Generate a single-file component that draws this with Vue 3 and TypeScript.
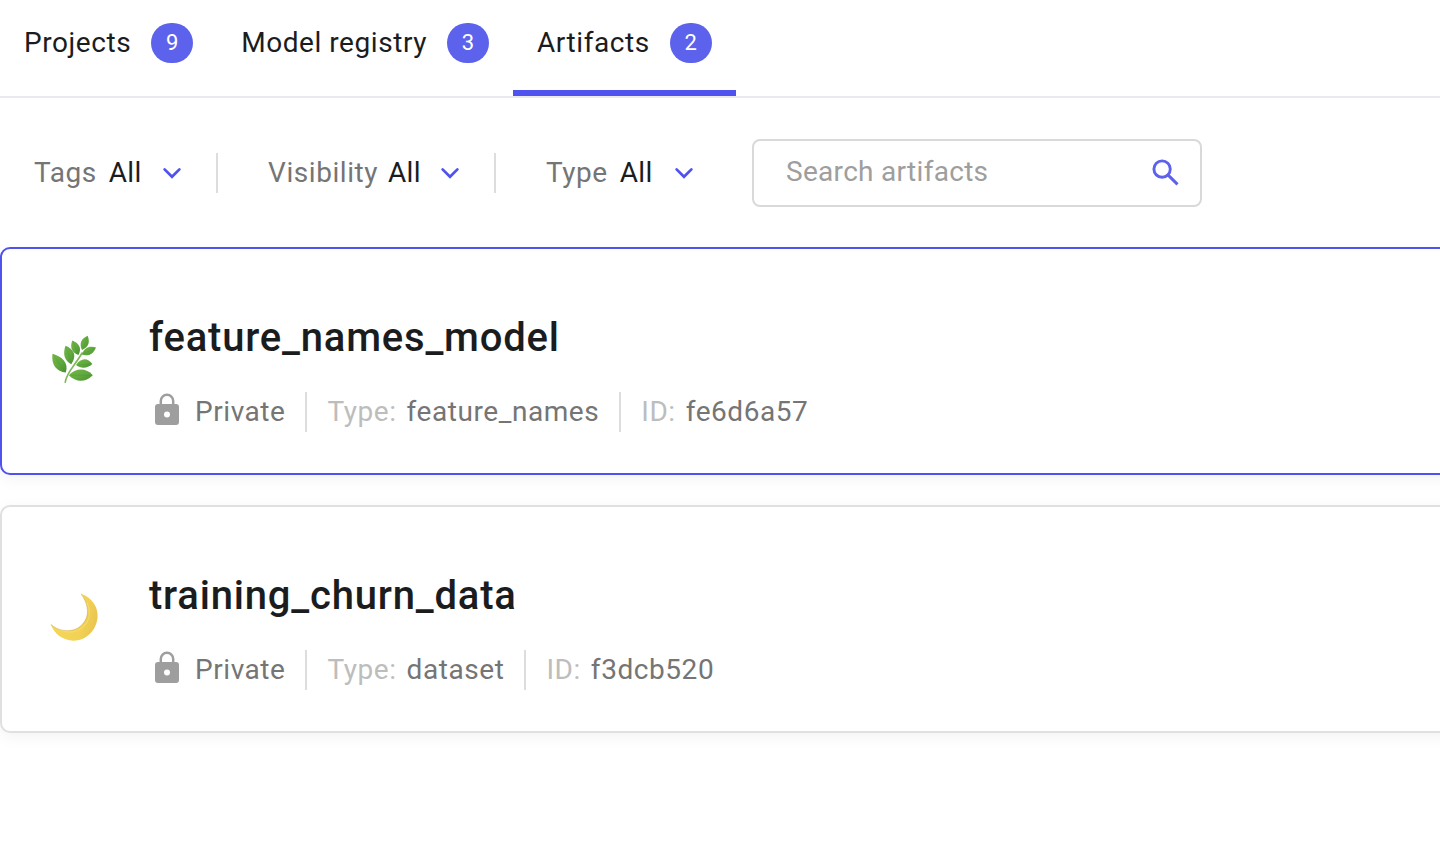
<script setup lang="ts">
interface Tab { label: string; count: number; active?: boolean }
interface Artifact { icon: 'herb' | 'moon'; name: string; type: string; id: string; selected?: boolean }

const tabs: Tab[] = [
  { label: 'Projects', count: 9 },
  { label: 'Model registry', count: 3 },
  { label: 'Artifacts', count: 2, active: true },
]
const filters: string[] = ['Tags', 'Visibility', 'Type']
const artifacts: Artifact[] = [
  { icon: 'herb', name: 'feature_names_model', type: 'feature_names', id: 'fe6d6a57', selected: true },
  { icon: 'moon', name: 'training_churn_data', type: 'dataset', id: 'f3dcb520' },
]
</script>

<template>
  <main class="page">
    <nav class="tabs">
      <a v-for="tab in tabs" :key="tab.label" class="tab" :class="{ active: tab.active }">
        <span>{{ tab.label }}</span>
        <span class="badge">{{ tab.count }}</span>
      </a>
    </nav>

    <div class="filters">
      <div v-for="name in filters" :key="name" class="filter" :class="name.toLowerCase()">
        <span class="filter-name">{{ name }}</span>
        <span class="filter-value">All</span>
        <svg class="chevron" width="20" height="14" viewBox="0 0 20 14">
          <path d="M2.6 3.4 10 10.800l7.400-7.400" fill="none" stroke="#4f52ee" stroke-width="2.700" stroke-linecap="round" />
        </svg>
      </div>
      <label class="search">
        <input type="text" placeholder="Search artifacts" />
        <svg width="28" height="28" viewBox="0 0 28 28" fill="none" stroke="#5d62ec" stroke-width="2.900">
          <circle cx="10.100" cy="10.100" r="8.200" />
          <path d="M15.900 15.900 25.500 25.400" stroke-width="3" />
        </svg>
      </label>
    </div>

    <section class="list">
      <article v-for="item in artifacts" :key="item.id" class="card" :class="{ selected: item.selected }">
        <svg v-if="item.icon === 'herb'" class="emoji" width="50" height="50" viewBox="0 0 50 50">
          <defs>
            <linearGradient id="leaf" x1="0" y1="0" x2="1" y2="1">
              <stop offset="0" stop-color="#74b848" />
              <stop offset=".55" stop-color="#5fa83d" />
              <stop offset="1" stop-color="#468f30" />
            </linearGradient>
          </defs>
          <path d="M15.200 48.300C16.500 38 25.500 31 32 19" fill="none" stroke="#7fb957" stroke-width="1.600" stroke-linecap="round" />
          <g fill="url(#leaf)">
            <path d="M2.500 19.800C12 22.500 19 28.500 15.800 38.600 6.500 37.500 1 31 2.500 19.800Z" />
            <path d="M15.500 11.700C23.500 15 27.500 21 21.200 30.300 14.500 26.500 12.500 20 15.500 11.700Z" />
            <path d="M22.300 6.500C29.500 9.500 32 14.500 28.400 21 22 18.500 19.500 13.500 22.300 6.500Z" />
            <path d="M37.700 1.700C40.200 8.500 38.500 13 32 16 29 9.500 31 4.500 37.700 1.700Z" />
            <path d="M46 13.400C43 20.500 38 22.500 31.800 20.600 34 14 39 11.500 46 13.400Z" />
            <path d="M42.300 30C37 34.800 31 34.800 26 31 30.500 24 37.500 23 42.300 30Z" />
            <path d="M42.800 41.200C35 48.800 26 48.300 18.800 41.200 25.500 34 36 33.500 42.800 41.200Z" />
          </g>
          <g fill="none" stroke="#3f8a30" stroke-width=".6" opacity=".4">
            <path d="M3 20.500 15.500 38M16 12.500l5.200 17M23 7.500l5.200 13M37.500 2.500l-5.300 13M45 14l-13 6.500M41.500 30 27 31M42 41.300 20 41.200" />
          </g>
        </svg>
        <svg v-else class="emoji" width="50" height="50" viewBox="0 0 50 50">
          <defs>
            <linearGradient id="moon" x1=".1" y1=".7" x2=".95" y2=".9">
              <stop offset="0" stop-color="#f3d657" />
              <stop offset=".6" stop-color="#f2d255" />
              <stop offset="1" stop-color="#e9c34e" />
            </linearGradient>
          </defs>
          <path d="M31 1.800C42.500 6 48.500 15.500 47.500 26 46 39.500 35 48.900 23.500 48.700 12.500 48.400 4 41.500.700 32.200 8 39 18.500 40.600 27 36.500 38.500 30 41.500 16.500 31 1.800Z" fill="url(#moon)" />
          <path d="M31 1.800C41.500 16.500 38.500 30 27 36.500 18.500 40.600 8 39 .700 32.200" fill="none" stroke="#c09638" stroke-width=".6" opacity=".65" />
          <path d="M37 10.500c5.500 12 1.500 23-9.500 28-6 2.300-12 2-17.500-.500" fill="none" stroke="#f8e58d" stroke-width="1.200" opacity=".45" />
        </svg>
        <div class="body">
          <h2>{{ item.name }}</h2>
          <div class="meta">
            <span class="privacy">
              <svg width="24" height="32" viewBox="0 0 24 32">
                <path d="M5.800 12V7.900a6.200 6.200 0 0 1 12.400 0V12" fill="none" stroke="#9e9e9e" stroke-width="2.500" />
                <path fill-rule="evenodd" d="M3 11h18a3 3 0 0 1 3 3V29a3 3 0 0 1-3 3H3a3 3 0 0 1-3-3V14a3 3 0 0 1 3-3Zm9 7.500a3 3 0 1 0 0 6 3 3 0 0 0 0-6Z" fill="#9e9e9e" />
              </svg>
              Private
            </span>
            <span class="field"><span class="key">Type:</span>{{ item.type }}</span>
            <span class="field"><span class="key">ID:</span>{{ item.id }}</span>
          </div>
        </div>
      </article>
    </section>
  </main>
</template>

<style>
body { background: #fff; overflow: hidden; }
</style>

<style scoped>
* { box-sizing: border-box; }
.page {
  height: 862px;
  font: 400 28px/40px Roboto, sans-serif;
  letter-spacing: 0.56px;
  color: #1b1c1d;
  white-space: nowrap;
}
.tabs { display: flex; height: 98px; border-bottom: 2px solid #e9e9ee; }
.tab { display: flex; gap: 20px; height: 96px; padding: 23px 24px 0; }
.tab.active { border-bottom: 6px solid #4f52ee; }
.badge {
  width: 42px;
  height: 40px;
  border-radius: 20px;
  background: #5d62ec;
  color: #fff;
  font-size: 22px;
  line-height: 40px;
  letter-spacing: 0;
  text-align: center;
}
.filters { display: flex; align-items: center; height: 149px; padding-left: 34px; }
.filter { display: flex; align-items: center; height: 40px; margin-top: 1px; }
.filter-name { color: #757575; }
.filter-value { margin-left: 12px; letter-spacing: 0.28px; }
.chevron { margin-left: 20px; }
.tags { width: 184px; border-right: 2px solid #ddd; }
.visibility { width: 278px; padding-left: 50px; border-right: 2px solid #ddd; }
.visibility .filter-value { margin-left: 10px; }
.visibility .chevron { margin-left: 19px; }
.type { width: 256px; padding-left: 50px; }
.type .chevron { margin-left: 21px; }
.search {
  display: flex;
  align-items: center;
  width: 450px;
  height: 68px;
  padding: 0 20px 0 32px;
  border: 2px solid #d9d9d9;
  border-radius: 8px;
  margin-top: 1px;
}
.search input {
  flex: 1;
  min-width: 0;
  height: 40px;
  padding: 0 0 2px;
  border: 0;
  outline: 0;
  font: inherit;
  letter-spacing: 0.3px;
}
.search input::placeholder { color: #9e9e9e; opacity: 1; }
.list { display: grid; gap: 30px; }
.card {
  display: flex;
  width: 1500px;
  height: 228px;
  border: 2px solid #e0e0e0;
  border-radius: 10px;
  background: #fff;
  box-shadow: 0 4px 16px rgba(0, 0, 0, 0.05);
}
.card.selected { border-color: #4f52ee; }
.emoji { margin: 85px 0 0 48px; }
.body { padding: 65px 0 0 49px; }
h2 { margin: 0; font-size: 40px; line-height: 48px; font-weight: 500; letter-spacing: 0.8px; }
.meta { display: flex; height: 40px; margin-top: 30px; color: #757575; }
.privacy { display: flex; gap: 16px; padding: 0 20px 0 6px; }
.privacy svg { margin-top: 1px; }
.field { padding: 0 20px; border-left: 2px solid #ddd; }
.key { margin-right: 10px; color: #bdbdbd; }
</style>
